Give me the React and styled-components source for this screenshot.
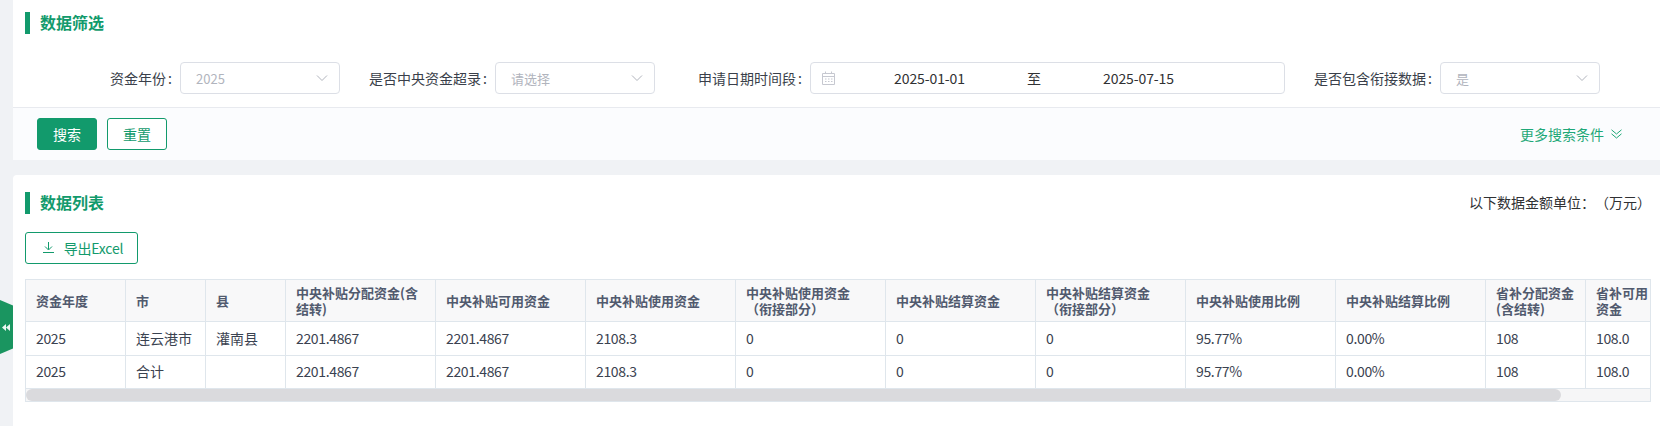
import React from 'react';
import styled, { createGlobalStyle } from 'styled-components';

const GlobalStyle = createGlobalStyle`
  html, body {
    margin: 0;
    padding: 0;
    background: #f0f2f5;
    font-family: "Noto Sans CJK SC", "Noto Sans", sans-serif;
    font-size: 14px;
    color: #303133;
    text-spacing-trim: space-all;
  }
  * { box-sizing: border-box; }
`;

const green = '#129a6c';

const Page = styled.div`
  width: 1660px;
  height: 426px;
  padding-left: 13px;
  overflow: hidden;
  position: relative;
`;

const Panel = styled.section`
  background: #fff;
  margin-bottom: 15px;
`;

const ListPanel = styled(Panel)`
  height: 251px;
  margin-bottom: 0;
  padding: 17px 9px 0 12px;
  border-radius: 4px 0 0 0;
`;

const SectionTitle = styled.h2`
  margin: 0;
  height: 22px;
  padding-left: 10px;
  border-left: 5px solid ${green};
  font-size: 16px;
  line-height: 20px;
  font-weight: 700;
  color: ${green};
`;

const TopTitle = styled(SectionTitle)`
  margin: 0 0 28px 12px;
`;

const FilterBody = styled.div`
  padding-top: 12px;
`;

const FilterRow = styled.div`
  display: flex;
  padding: 0 0 13px 12px;
  border-bottom: 1px solid #e8eaef;
`;

const FilterItem = styled.div`
  display: flex;
  align-items: center;
  height: 32px;
`;

const Label = styled.label`
  width: 155px;
  padding-right: 8px;
  text-align: right;
  white-space: nowrap;
  line-height: 30px;
  color: #3a3f4a;

  &::after {
    content: ':';
    margin-left: 2px;
  }
`;

const SelectBox = styled.div`
  display: flex;
  align-items: center;
  justify-content: space-between;
  width: 160px;
  height: 32px;
  padding: 0 11px 0 15px;
  background: #fff;
  border: 1px solid #dcdfe6;
  border-radius: 4px;
  color: #b1b4bd;
  font-size: 13px;
`;

const DateBox = styled(SelectBox)`
  justify-content: flex-start;
  width: 475px;
  padding: 0 0 0 11px;
  color: #303133;
`;

const DateIcon = styled.svg`
  width: 13px;
  height: 14px;
  flex: none;
`;

const DateValue = styled.span`
  width: 189px;
  text-align: center;
  font-size: 14px;
  letter-spacing: -0.1px;
`;

const DateSeparator = styled.span`
  width: 20px;
  text-align: center;
  font-size: 14px;
`;

const FooterBar = styled.div`
  display: flex;
  align-items: center;
  justify-content: space-between;
  height: 52px;
  padding: 0 38px 0 24px;
  background: #fbfcfe;
`;

const ButtonGroup = styled.div`
  display: flex;
  gap: 10px;
`;

const Button = styled.button`
  display: inline-flex;
  align-items: center;
  justify-content: center;
  width: ${(p) => p.$width || 60}px;
  height: 32px;
  padding: 0 0 1px;
  font-family: inherit;
  font-size: 14px;
  border: 1px solid ${green};
  border-radius: 3px;
  background: ${(p) => (p.$primary ? green : '#fff')};
  color: ${(p) => (p.$primary ? '#fff' : green)};
`;

const MoreLink = styled.a`
  display: flex;
  align-items: center;
  gap: 7px;
  color: #1fa878;
  font-size: 14px;
`;

const ListHead = styled.div`
  display: flex;
  align-items: flex-start;
  justify-content: space-between;
  margin-bottom: 18px;
`;

const UnitNote = styled.div`
  line-height: 20px;
  white-space: nowrap;
  color: #303133;
`;

const ExportButton = styled(Button)`
  gap: 10px;
  padding-left: 3px;
  margin-bottom: 15px;
  letter-spacing: -0.2px;
`;

const TableWrap = styled.div`
  width: 1626px;
  border: 1px solid #dfe6ec;
  overflow: hidden;
`;

const Table = styled.table`
  table-layout: fixed;
  width: 1720px;
  border-collapse: separate;
  border-spacing: 0;
`;

const HeadCell = styled.th`
  height: 42px;
  padding: 0 10px;
  background: #f8f8f9;
  border-right: 1px solid #dfe6ec;
  border-bottom: 1px solid #dfe6ec;
  text-align: left;
  font-size: 13px;
  line-height: 16px;
  font-weight: 700;
  color: #515a6e;
`;

const Cell = styled.td`
  height: 33.5px;
  padding: 0 10px 1px;
  background: #fff;
  border-right: 1px solid #dfe6ec;
  border-bottom: 1px solid #dfe6ec;
  font-size: 14px;
  color: #3a4250;
  white-space: nowrap;
  letter-spacing: ${(p) => (p.$numeric ? '-0.35px' : '0')};
`;

const ScrollTrack = styled.div`
  height: 12px;
  background: #f6f6f7;
`;

const ScrollThumb = styled.div`
  width: 1535px;
  height: 12px;
  background: #dadadd;
  border-radius: 6px;
`;

const SideToggle = styled.div`
  position: absolute;
  left: 0;
  top: 300px;
  display: flex;
  align-items: center;
  width: 13px;
  height: 54px;
  padding-left: 2px;
  background: #1a9560;
  clip-path: polygon(0 0, 100% 10%, 100% 90%, 0 100%);
`;

const Arrow = () => (
  <svg width="12" height="8" viewBox="0 0 12 8" fill="none" stroke="#b1b4bd" strokeWidth="1">
    <path d="M1 1.500 6 6.500l5-5" />
  </svg>
);

const columns = [
  { width: 100, title: '资金年度' },
  { width: 80, title: '市' },
  { width: 80, title: '县' },
  { width: 150, title: <>中央补贴分配资金(含<br />结转)</> },
  { width: 150, title: '中央补贴可用资金' },
  { width: 150, title: '中央补贴使用资金' },
  { width: 150, title: <>中央补贴使用资金<br />（衔接部分）</> },
  { width: 150, title: '中央补贴结算资金' },
  { width: 150, title: <>中央补贴结算资金<br />（衔接部分）</> },
  { width: 150, title: '中央补贴使用比例' },
  { width: 150, title: '中央补贴结算比例' },
  { width: 100, title: <>省补分配资金<br />(含结转)</> },
  { width: 160, title: <>省补可用<br />资金</> },
];

const rows = [
  ['2025', '连云港市', '灌南县', '2201.4867', '2201.4867', '2108.3', '0', '0', '0', '95.77%', '0.00%', '108', '108.0'],
  ['2025', '合计', '', '2201.4867', '2201.4867', '2108.3', '0', '0', '0', '95.77%', '0.00%', '108', '108.0'],
];

function App() {
  return (
    <Page>
      <GlobalStyle />
      <SideToggle>
        <svg width="8" height="7" viewBox="0 0 8 7" fill="#eef8f3">
          <path d="M4 0v7L0 3.500zM8 0v7L4 3.500z" />
        </svg>
      </SideToggle>

      <Panel>
        <FilterBody>
          <TopTitle>数据筛选</TopTitle>
          <FilterRow>
            <FilterItem>
              <Label>资金年份</Label>
              <SelectBox>2025<Arrow /></SelectBox>
            </FilterItem>
            <FilterItem>
              <Label>是否中央资金超录</Label>
              <SelectBox>请选择<Arrow /></SelectBox>
            </FilterItem>
            <FilterItem>
              <Label>申请日期时间段</Label>
              <DateBox>
                <DateIcon viewBox="0 0 13 14" fill="none" stroke="#c6c8d0" strokeWidth="1">
                  <path d="M.5 2.500h12v11H.5zM.5 5.500h12M3.500 .5v2M9.500 .5v2" />
                  <path d="M3 8h1.500M6 8h1.500M9 8h1.500M3 10.500h1.500M6 10.500h1.500M9 10.500h1.500" />
                </DateIcon>
                <DateValue>2025-01-01</DateValue>
                <DateSeparator>至</DateSeparator>
                <DateValue>2025-07-15</DateValue>
              </DateBox>
            </FilterItem>
            <FilterItem>
              <Label>是否包含衔接数据</Label>
              <SelectBox>是<Arrow /></SelectBox>
            </FilterItem>
          </FilterRow>
        </FilterBody>
        <FooterBar>
          <ButtonGroup>
            <Button $primary>搜索</Button>
            <Button>重置</Button>
          </ButtonGroup>
          <MoreLink>
            更多搜索条件
            <svg width="11" height="10" viewBox="0 0 11 10" fill="none" stroke="#1fa878" strokeWidth="1">
              <path d="M.5 .8 5.500 5l5-4.200M.5 4.800 5.500 9l5-4.200" />
            </svg>
          </MoreLink>
        </FooterBar>
      </Panel>

      <ListPanel>
        <ListHead>
          <SectionTitle>数据列表</SectionTitle>
          <UnitNote>以下数据金额单位：（万元）</UnitNote>
        </ListHead>
        <ExportButton $width={113}>
          <svg width="11" height="11" viewBox="0 0 11 11" fill="none" stroke={green} strokeWidth="1">
            <path d="M5.500 0v7.500M2 4.500l3.500 3.500L9 4.500M0 10.500h11" />
          </svg>
          导出Excel
        </ExportButton>
        <TableWrap>
          <Table>
            <colgroup>
              {columns.map((col, i) => <col key={i} style={{ width: col.width }} />)}
            </colgroup>
            <thead>
              <tr>
                {columns.map((col, i) => <HeadCell key={i}>{col.title}</HeadCell>)}
              </tr>
            </thead>
            <tbody>
              {rows.map((row, r) => (
                <tr key={r}>
                  {row.map((val, c) => <Cell key={c} $numeric={c !== 1 && c !== 2}>{val}</Cell>)}
                </tr>
              ))}
            </tbody>
          </Table>
          <ScrollTrack>
            <ScrollThumb />
          </ScrollTrack>
        </TableWrap>
      </ListPanel>
    </Page>
  );
}

export default App;
